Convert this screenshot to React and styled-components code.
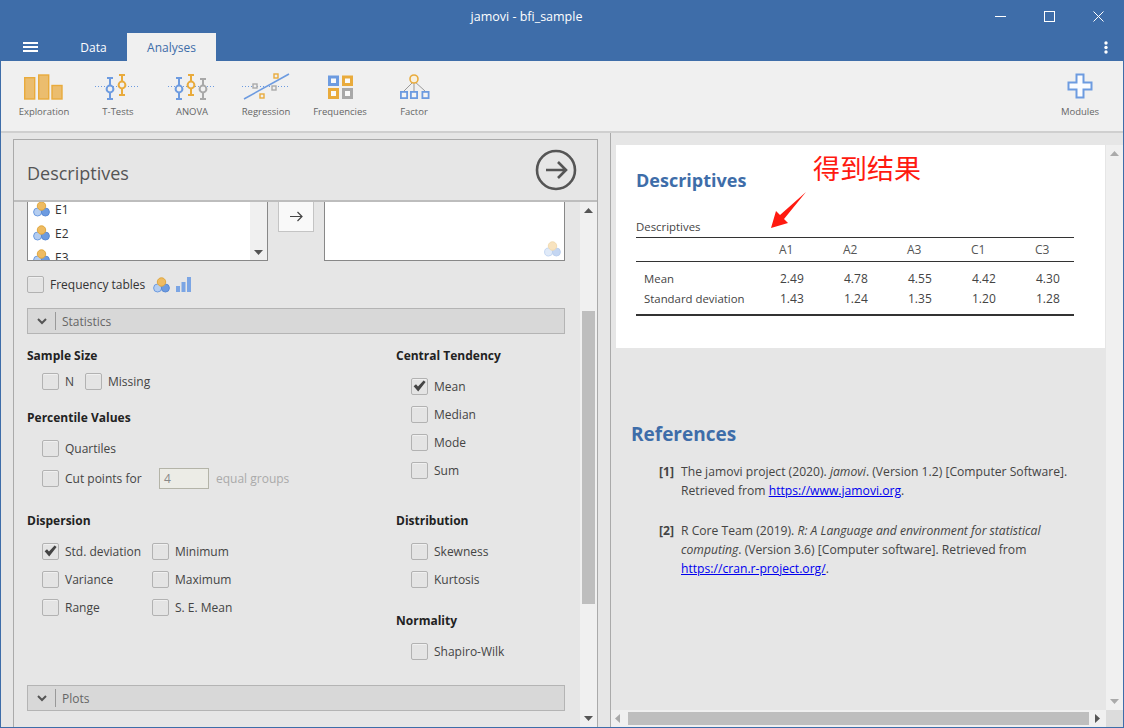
import React from 'react'
import styled, { createGlobalStyle } from 'styled-components'

const blue = '#3e6da9'
const sans = '"Open Sans", "Noto Sans", sans-serif'

const Global = createGlobalStyle`
  html, body { margin: 0; padding: 0; overflow: hidden; }
  body { font-family: ${sans}; font-size: 12px; color: #333; }
  * { box-sizing: border-box; }
`

const Win = styled.div`
  width: 1124px;
  height: 728px;
  display: flex;
  flex-direction: column;
  background: ${blue};
  padding: 0 1px 1px 1px;
  overflow: hidden;
`

const TitleBar = styled.div`
  height: 33px;
  flex: none;
  display: flex;
  align-items: center;
  color: #fff;
  font-size: 12.5px;
`
const Title = styled.div`
  width: 975px;
  padding-left: 76px;
  text-align: center;
`
const WinControls = styled.div`
  display: flex;
  flex: none;
`
const WinButton = styled.div`
  width: 49px;
  height: 33px;
  display: flex;
  align-items: center;
  justify-content: center;
`

const TabRow = styled.div`
  height: 28px;
  flex: none;
  display: flex;
  align-items: stretch;
  position: relative;
`
const Burger = styled.div`
  width: 59px;
  padding-left: 22px;
  display: flex;
  align-items: center;
`
const Tab = styled.div`
  width: ${p => p.$w}px;
  display: flex;
  align-items: center;
  justify-content: center;
  font-size: 12px;
  color: ${p => (p.$active ? blue : '#fff')};
  background: ${p => (p.$active ? '#f0f0f0' : 'transparent')};
`
const Dots = styled.div`
  margin-left: auto;
  width: 35px;
  display: flex;
  align-items: center;
  justify-content: center;
`

const Toolbar = styled.div`
  height: 72px;
  flex: none;
  display: flex;
  padding-left: 6px;
  background: #f0f0f0;
  border-bottom: 2px solid #cfcfcf;
`
const ToolItem = styled.div`
  width: 74px;
  display: flex;
  flex-direction: column;
  align-items: center;
  color: #666;
  font-size: 9.5px;
  padding-top: 10px;
  margin-left: ${p => (p.$push ? 'auto' : 0)};
  margin-right: ${p => (p.$push ? '6px' : 0)};
`
const ToolIcon = styled.div`
  height: 30px;
  margin-bottom: 4px;
  display: flex;
  align-items: center;
`

const Main = styled.div`
  flex: 1;
  min-height: 0;
  display: flex;
  background: #e6e6e6;
  padding-left: 12px;
`

const Options = styled.div`
  width: 585px;
  flex: none;
  margin-top: 6px;
  border: 1px solid #aaa;
  border-bottom: 0;
  display: flex;
  flex-direction: column;
  overflow: hidden;
`
const OptionsHead = styled.div`
  height: 62px;
  flex: none;
  display: flex;
  align-items: center;
  justify-content: space-between;
  padding: 0 20px 0 13px;
  border-bottom: 2px solid #bdbdbd;
  font-size: 18px;
  color: #555;
`
const HeadText = styled.span`
  margin-top: 5px;
`
const OptionsBody = styled.div`
  flex: 1;
  min-height: 0;
  display: flex;
`
const OptionsScroll = styled.div`
  flex: 1;
  min-width: 0;
  padding: 0 15px 0 13px;
  overflow: hidden;
`

const VarRow = styled.div`
  display: flex;
  height: 59px;
`
const VarList = styled.div`
  width: 241px;
  height: 59px;
  flex: none;
  background: #fff;
  border: 1px solid #888;
  border-top: 0;
  display: flex;
  position: relative;
  overflow: hidden;
`
const VarItems = styled.div`
  flex: 1;
  margin-top: -5px;
  padding-left: 5px;
`
const VarItem = styled.div`
  height: 24px;
  display: flex;
  align-items: center;
  gap: 5px;
`
const MiniBar = styled.div`
  width: 17px;
  flex: none;
  background: #f0f0f0;
  display: flex;
  flex-direction: column;
  justify-content: flex-end;
  align-items: center;
  padding-bottom: 5px;
`
const Ghost = styled.div`
  position: absolute;
  right: 3px;
  bottom: 3px;
  opacity: 0.4;
  display: flex;
`
const MoveButton = styled.div`
  width: 36px;
  height: 30px;
  margin: 0 10px;
  flex: none;
  background: #f9f9f9;
  border: 1px solid #c4c4c4;
  border-top: 0;
  display: flex;
  align-items: center;
  justify-content: center;
`

const FreqRow = styled.div`
  display: flex;
  align-items: center;
  margin-top: 15px;
  height: 17px;
  gap: 6px;
`
const FreqIcons = styled.div`
  display: flex;
  align-items: center;
  gap: 6px;
  margin-left: 2px;
`

const Collapse = styled.div`
  width: 538px;
  height: 26px;
  display: flex;
  align-items: center;
  background: #d8d8d8;
  border: 1px solid #b4b4b4;
  color: #666;
  margin-top: ${p => p.$top}px;
`
const Chevron = styled.div`
  width: 28px;
  height: 18px;
  display: flex;
  align-items: center;
  justify-content: center;
  border-right: 1px solid #999;
  margin-right: 6px;
`

const Columns = styled.div`
  display: flex;
  margin-top: 14px;
`
const Column = styled.div`
  width: ${p => p.$w}px;
  flex: none;
`
const GroupTitle = styled.div`
  font-weight: 700;
  font-size: 12px;
  line-height: 16px;
  color: #222;
  margin-top: ${p => p.$top || 0}px;
  margin-bottom: ${p => p.$gap}px;
`
const Row = styled.div`
  display: flex;
  align-items: center;
  height: ${p => p.$h || 28}px;
  padding-left: 15px;
`
const Grid = styled.div`
  display: grid;
  grid-template-columns: 110px auto;
  grid-auto-rows: 28px;
  padding-left: 15px;
`
const Check = styled.label`
  display: inline-flex;
  align-items: center;
  gap: 6px;
  margin-right: ${p => p.$mr || 0}px;
  color: #444;
`
const Box = styled.span`
  width: 17px;
  height: 17px;
  flex: none;
  display: inline-flex;
  align-items: center;
  justify-content: center;
  border: 1px solid #b2b2b2;
  border-radius: 2px;
  background: #e4e4e4;
  box-shadow: inset 0 1px 0 #f0f0f0;
`
const NumInput = styled.div`
  width: 50px;
  height: 21px;
  margin: 0 7px 0 auto;
  padding-left: 4px;
  border: 1px solid #b4b4a8;
  background: #ecece6;
  color: #888;
  display: flex;
  align-items: center;
`
const CutLabel = styled.div`
  display: flex;
  align-items: center;
  width: 174px;
`
const Dim = styled.span`
  color: #aaa;
`

const VScroll = styled.div`
  width: 17px;
  flex: none;
  background: #f0f0f0;
  display: flex;
  flex-direction: column;
  align-items: center;
`
const Thumb = styled.div`
  width: 13px;
  height: ${p => p.$h}px;
  background: #bebebe;
  margin-top: ${p => p.$top}px;
`
const ArrowSlot = styled.div`
  height: 17px;
  flex: none;
  display: flex;
  align-items: center;
  justify-content: center;
  margin-top: ${p => (p.$end ? 'auto' : 0)};
`

const Results = styled.div`
  flex: 1;
  min-width: 0;
  margin-left: 12px;
  border-left: 1px solid #aaa;
  display: grid;
  grid-template-columns: 1fr 17px;
  grid-template-rows: 1fr 17px;
  overflow: hidden;
`
const ResultsPane = styled.div`
  padding: 12px 0 0 5px;
  overflow: hidden;
`
const ResultsScroll = styled(VScroll)`
  margin-top: 12px;
  padding-top: 0;
  width: 17px;
  height: auto;
`
const HBar = styled.div`
  display: flex;
  align-items: center;
  background: #f0f0f0;
  padding: 0 17px 0 17px;
  position: relative;
`
const HThumb = styled.div`
  flex: 1;
  height: 13px;
  background: #bebebe;
`
const HArrow = styled.div`
  position: absolute;
  top: 4px;
  left: ${p => p.$left}px;
  display: flex;
`
const Corner = styled.div`
  background: #dcdcdc;
`

const Card = styled.div`
  width: 489px;
  height: 203px;
  background: #fff;
  padding: 22px 31px 0 20px;
  position: relative;
`
const CardTitle = styled.div`
  font-size: 18px;
  font-weight: 700;
  line-height: 26px;
  color: ${blue};
`
const Caption = styled.div`
  margin-top: 25px;
  height: 19px;
  font-size: 11.4px;
  line-height: 17px;
  color: #444;
`
const Table = styled.div`
  border-top: 1px solid #333;
  border-bottom: 2px solid #333;
  padding-bottom: 6px;
`
const THead = styled.div`
  display: grid;
  grid-template-columns: 143px repeat(5, 64px);
  height: 24px;
  align-items: center;
  border-bottom: 1px solid #333;
  margin-bottom: 6px;
  color: #555;
`
const TRow = styled.div`
  display: grid;
  grid-template-columns: 143px repeat(5, 64px);
  height: 20px;
  align-items: center;
  color: #444;
`
const RowLabel = styled.div`
  padding-left: 8px;
  font-size: 11.4px;
  white-space: nowrap;
`
const Num = styled.div`
  padding-left: 1px;
`
const Note = styled.div`
  position: absolute;
  left: 197px;
  top: 5px;
  color: #ff1a10;
  font-size: 27px;
  line-height: 36px;
  font-family: "Noto Sans CJK SC", sans-serif;
  font-weight: 400;
  white-space: nowrap;
`
const NoteArrow = styled.svg`
  position: absolute;
  left: 150px;
  top: 44px;
`

const RefTitle = styled.div`
  font-size: 19px;
  font-weight: 700;
  line-height: 28px;
  color: ${blue};
  margin: 72px 0 14px 15px;
`
const RefItem = styled.div`
  display: flex;
  margin-bottom: 21px;
  padding-left: 43px;
  font-size: 12.15px;
  line-height: 19px;
  color: #444;
`
const RefNum = styled.div`
  width: 22px;
  flex: none;
  font-weight: 700;
`
const RefText = styled.div`
  width: 395px;
`
const A = styled.a`
  color: #0000ee;
  text-decoration: underline;
`

const Tri = ({ dir = 'down', color = '#555' }) => {
  const pts = { down: '0,0 9,0 4.5,5', up: '0,5 9,5 4.5,0', left: '5,0 5,9 0,4.5', right: '0,0 0,9 5,4.5' }[dir]
  const vert = dir === 'up' || dir === 'down'
  return (
    <svg width={vert ? 9 : 5} height={vert ? 5 : 9}>
      <polygon points={pts} fill={color} />
    </svg>
  )
}

const Nominal = () => (
  <svg width="17" height="16" viewBox="0 0 17 16">
    <circle cx="4.6" cy="11" r="4" fill="#b4cdf0" stroke="#6d9be0" strokeWidth="1" />
    <circle cx="12.4" cy="11" r="4" fill="#6d9be0" stroke="#5a8ad4" strokeWidth="1" />
    <circle cx="8.5" cy="5" r="4.2" fill="#eebb62" stroke="#e0a73e" strokeWidth="1" />
  </svg>
)

const Tick = () => (
  <svg width="13" height="12" viewBox="0 0 13 12">
    <path d="M.6 6.3 L3 4.2 L5 6.5 L10.6 .4 L12.6 2 L5.2 11.4 Z" fill="#444" />
  </svg>
)

const Exploration = () => (
  <svg width="40" height="28" viewBox="0 0 40 28">
    <g fill="#ebbd6e" stroke="#e9ab3c" strokeWidth="1.4">
      <rect x=".7" y="5.7" width="10" height="21.3" />
      <rect x="14.7" y="3" width="10" height="24" />
      <rect x="28" y="13.5" width="10" height="13.5" />
    </g>
  </svg>
)

const ErrBar = ({ x, y, top, bot, color }) => (
  <g stroke={color} strokeWidth="2" fill="#f0f0f0">
    <path d={`M${x - 3} ${top}h6M${x} ${top}V${bot}M${x - 3} ${bot}h6`} fill="none" />
    <circle cx={x} cy={y} r="3.4" />
  </g>
)

const TTests = () => (
  <svg width="48" height="28" viewBox="0 0 48 28">
    <path d="M1 14.5H46" stroke="#6d9be0" strokeDasharray="1 2" />
    <ErrBar x={16} y={17} top={6} bot={27} color="#6d9be0" />
    <ErrBar x={28} y={13} top={3} bot={23} color="#e9ab3c" />
  </svg>
)

const Anova = () => (
  <svg width="48" height="28" viewBox="0 0 48 28">
    <path d="M0 14.5H46" stroke="#6d9be0" strokeDasharray="1 2" />
    <ErrBar x={11} y={17} top={6} bot={27} color="#6d9be0" />
    <ErrBar x={23} y={13} top={3} bot={23} color="#e9ab3c" />
    <ErrBar x={35} y={17} top={7} bot={27} color="#a8a8a8" />
  </svg>
)

const Regression = () => (
  <svg width="48" height="28" viewBox="0 0 48 28">
    <path d="M0 14.5H47" stroke="#6d9be0" strokeDasharray="1 2" />
    <path d="M2 27 L47 2" stroke="#6d9be0" strokeWidth="1.6" />
    <g fill="#f0f0f0" strokeWidth="1.4">
      <rect x="11" y="12" width="4" height="4" stroke="#aaa" />
      <rect x="30" y="14" width="4" height="4" stroke="#aaa" />
      <rect x="32" y="2" width="4" height="4" stroke="#e9ab3c" />
      <rect x="18" y="22" width="4" height="4" stroke="#e9ab3c" />
    </g>
  </svg>
)

const Frequencies = () => (
  <svg width="26" height="26" viewBox="0 0 26 26">
    <g fill="#fafafa" strokeWidth="3">
      <rect x="2.5" y="4" width="8" height="7.5" stroke="#6d9be0" />
      <rect x="16.5" y="4" width="8" height="7.5" stroke="#e9ab3c" />
      <rect x="2.5" y="16.5" width="8" height="8" stroke="#e9ab3c" />
      <rect x="16.5" y="16.5" width="8" height="8" stroke="#a8a8a8" />
    </g>
  </svg>
)

const Factor = () => (
  <svg width="32" height="28" viewBox="0 0 32 28">
    <path d="M16 9 L6 19M16 9V19M16 9L27 19" stroke="#999" strokeWidth="1" />
    <circle cx="16" cy="7" r="4" fill="#f7f0e0" stroke="#e9ab3c" strokeWidth="1.6" />
    <g fill="#f4f4f4" stroke="#6d9be0" strokeWidth="1.8">
      <rect x="2.9" y="19.9" width="6.2" height="6.2" />
      <rect x="12.9" y="19.9" width="6.2" height="6.2" />
      <rect x="24.4" y="19.9" width="6.2" height="6.2" />
    </g>
  </svg>
)

const Plus = () => (
  <svg width="26" height="26" viewBox="0 0 26 26">
    <path d="M9.5 1.5h7V9.5h8v7h-8v8h-7v-8H1.5v-7h8z" fill="#fbfcff" stroke="#6d9be0" strokeWidth="2" />
  </svg>
)

const BarsIcon = () => (
  <svg width="15" height="15" viewBox="0 0 15 15">
    <g fill="#7ba5e4">
      <rect x="0" y="9" width="4" height="6" />
      <rect x="5.5" y="5" width="4" height="10" />
      <rect x="11" y="0" width="4" height="15" />
    </g>
  </svg>
)

const tools = [
  ['Exploration', Exploration],
  ['T-Tests', TTests],
  ['ANOVA', Anova],
  ['Regression', Regression],
  ['Frequencies', Frequencies],
  ['Factor', Factor],
]

const Option = ({ label, checked, mr }) => (
  <Check $mr={mr}>
    <Box>{checked && <Tick />}</Box>
    {label}
  </Check>
)

export default function App() {
  return (
    <Win>
      <Global />
      <TitleBar>
        <Title>jamovi - bfi_sample</Title>
        <WinControls>
          <WinButton>
            <svg width="11" height="11"><path d="M0 5.5H11" stroke="#fff" /></svg>
          </WinButton>
          <WinButton>
            <svg width="11" height="11"><rect x=".5" y=".5" width="10" height="10" fill="none" stroke="#fff" /></svg>
          </WinButton>
          <WinButton>
            <svg width="11" height="11"><path d="M.5 .5L10.5 10.5M10.5 .5L.5 10.5" stroke="#fff" /></svg>
          </WinButton>
        </WinControls>
      </TitleBar>
      <TabRow>
        <Burger>
          <svg width="15" height="10"><path d="M0 1H15M0 5H15M0 9H15" stroke="#fff" strokeWidth="2" /></svg>
        </Burger>
        <Tab $w={67}>Data</Tab>
        <Tab $w={89} $active>Analyses</Tab>
        <Dots>
          <svg width="4" height="13">
            <circle cx="2" cy="2" r="1.7" fill="#fff" />
            <circle cx="2" cy="6.5" r="1.7" fill="#fff" />
            <circle cx="2" cy="11" r="1.7" fill="#fff" />
          </svg>
        </Dots>
      </TabRow>
      <Toolbar>
        {tools.map(([name, Icon]) => (
          <ToolItem key={name}>
            <ToolIcon><Icon /></ToolIcon>
            {name}
          </ToolItem>
        ))}
        <ToolItem $push>
          <ToolIcon><Plus /></ToolIcon>
          Modules
        </ToolItem>
      </Toolbar>
      <Main>
        <Options>
          <OptionsHead>
            <HeadText>Descriptives</HeadText>
            <svg width="42" height="42" viewBox="0 0 42 42">
              <circle cx="21" cy="21" r="19" fill="none" stroke="#555" strokeWidth="2.6" />
              <path d="M11 21H31M23 13L31 21L23 29" fill="none" stroke="#555" strokeWidth="2.6" />
            </svg>
          </OptionsHead>
          <OptionsBody>
            <OptionsScroll>
              <VarRow>
                <VarList>
                  <VarItems>
                    {['E1', 'E2', 'E3'].map(v => (
                      <VarItem key={v}><Nominal />{v}</VarItem>
                    ))}
                  </VarItems>
                  <MiniBar><Tri /></MiniBar>
                </VarList>
                <MoveButton>
                  <svg width="13" height="11" viewBox="0 0 13 11">
                    <path d="M0 5.5H12M7.5 1L12 5.5L7.5 10" fill="none" stroke="#444" strokeWidth="1.2" />
                  </svg>
                </MoveButton>
                <VarList>
                  <Ghost><Nominal /></Ghost>
                </VarList>
              </VarRow>
              <FreqRow>
                <Box />
                Frequency tables
                <FreqIcons><Nominal /><BarsIcon /></FreqIcons>
              </FreqRow>
              <Collapse $top={15}>
                <Chevron>
                  <svg width="10" height="7"><path d="M1 1L5 5L9 1" fill="none" stroke="#555" strokeWidth="2" /></svg>
                </Chevron>
                Statistics
              </Collapse>
              <Columns>
                <Column $w={369}>
                  <GroupTitle $gap={3}>Sample Size</GroupTitle>
                  <Row>
                    <Option label="N" mr={11} />
                    <Option label="Missing" />
                  </Row>
                  <GroupTitle $top={15} $gap={7}>Percentile Values</GroupTitle>
                  <Row $h={30}><Option label="Quartiles" /></Row>
                  <Row $h={30}>
                    <CutLabel>
                      <Option label="Cut points for" />
                      <NumInput>4</NumInput>
                    </CutLabel>
                    <Dim>equal groups</Dim>
                  </Row>
                  <GroupTitle $top={20} $gap={8}>Dispersion</GroupTitle>
                  <Grid>
                    <Option label="Std. deviation" checked />
                    <Option label="Minimum" />
                    <Option label="Variance" />
                    <Option label="Maximum" />
                    <Option label="Range" />
                    <Option label="S. E. Mean" />
                  </Grid>
                </Column>
                <Column $w={150}>
                  <GroupTitle $gap={8}>Central Tendency</GroupTitle>
                  <Row><Option label="Mean" checked /></Row>
                  <Row><Option label="Median" /></Row>
                  <Row><Option label="Mode" /></Row>
                  <Row><Option label="Sum" /></Row>
                  <GroupTitle $top={29} $gap={8}>Distribution</GroupTitle>
                  <Row><Option label="Skewness" /></Row>
                  <Row><Option label="Kurtosis" /></Row>
                  <GroupTitle $top={20} $gap={8}>Normality</GroupTitle>
                  <Row><Option label="Shapiro-Wilk" /></Row>
                </Column>
              </Columns>
              <Collapse $top={20}>
                <Chevron>
                  <svg width="10" height="7"><path d="M1 1L5 5L9 1" fill="none" stroke="#555" strokeWidth="2" /></svg>
                </Chevron>
                Plots
              </Collapse>
            </OptionsScroll>
            <VScroll>
              <ArrowSlot><Tri dir="up" /></ArrowSlot>
              <Thumb $top={92} $h={293} />
              <ArrowSlot $end><Tri /></ArrowSlot>
            </VScroll>
          </OptionsBody>
        </Options>
        <Results>
          <ResultsPane>
            <Card>
              <CardTitle>Descriptives</CardTitle>
              <Caption>Descriptives</Caption>
              <Table>
                <THead>
                  <div />
                  {['A1', 'A2', 'A3', 'C1', 'C3'].map(h => <div key={h}>{h}</div>)}
                </THead>
                <TRow>
                  <RowLabel>Mean</RowLabel>
                  {['2.49', '4.78', '4.55', '4.42', '4.30'].map(n => <Num key={n}>{n}</Num>)}
                </TRow>
                <TRow>
                  <RowLabel>Standard deviation</RowLabel>
                  {['1.43', '1.24', '1.35', '1.20', '1.28'].map(n => <Num key={n}>{n}</Num>)}
                </TRow>
              </Table>
              <Note>得到结果</Note>
              <NoteArrow width="42" height="42" viewBox="0 0 42 42">
                <path d="M40 3 L18 30 L22 34 L5 39 L10 22 L14 26 Z" fill="#ff1a10" />
              </NoteArrow>
            </Card>
            <RefTitle>References</RefTitle>
            <RefItem>
              <RefNum>[1]</RefNum>
              <RefText>
                The jamovi project (2020). <i>jamovi</i>. (Version 1.2) [Computer Software]. Retrieved from <A href="#">https://www.jamovi.org</A>.
              </RefText>
            </RefItem>
            <RefItem>
              <RefNum>[2]</RefNum>
              <RefText>
                R Core Team (2019). <i>R: A Language and environment for statistical computing</i>. (Version 3.6) [Computer software]. Retrieved from <A href="#">https://cran.r-project.org/</A>.
              </RefText>
            </RefItem>
          </ResultsPane>
          <ResultsScroll>
            <ArrowSlot><Tri dir="up" color="#aaa" /></ArrowSlot>
            <ArrowSlot $end><Tri color="#aaa" /></ArrowSlot>
          </ResultsScroll>
          <HBar>
            <HArrow $left={4}><Tri dir="left" color="#aaa" /></HArrow>
            <HThumb />
            <HArrow $left={484}><Tri dir="right" /></HArrow>
          </HBar>
          <Corner />
        </Results>
      </Main>
    </Win>
  )
}
